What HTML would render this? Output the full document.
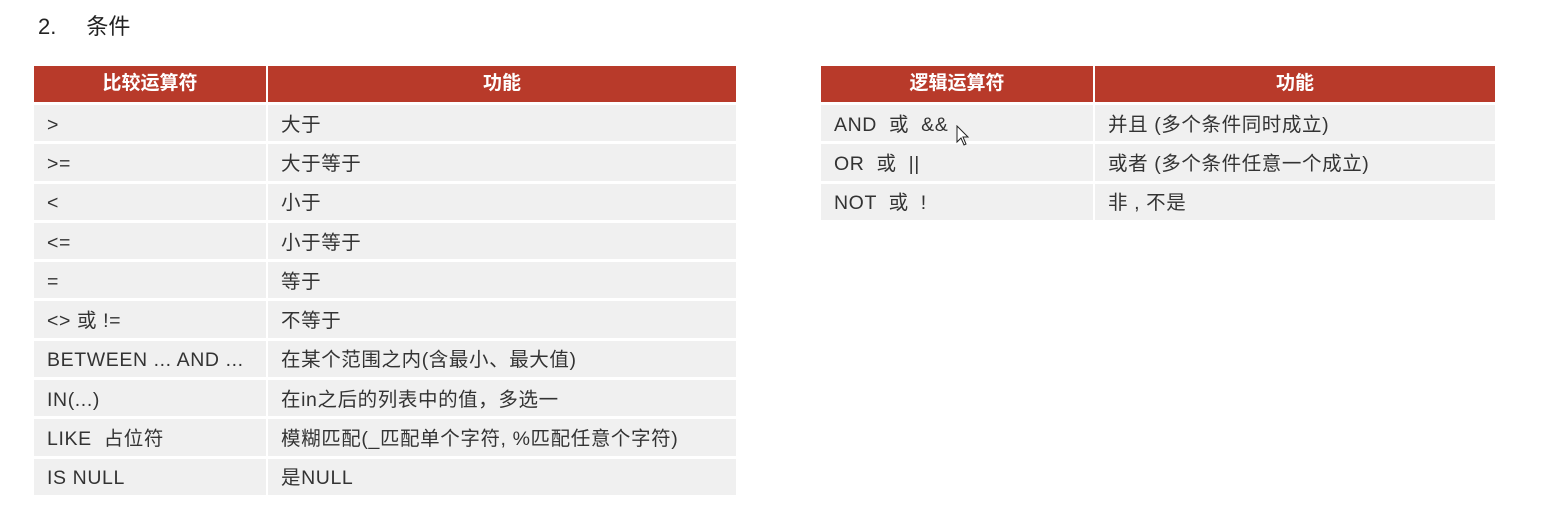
<!DOCTYPE html>
<html><head><meta charset="utf-8"><style>
body{margin:0;width:1563px;height:507px;background:#fff;font-family:"Liberation Sans","Noto Sans CJK SC",sans-serif;color:#333;position:relative;overflow:hidden}
.t{position:absolute;font-size:22px;top:9px;left:38px;color:#222}
.t span{margin-left:30px}
table{position:absolute;border-collapse:separate;border-spacing:2px 3px;top:63px}
th{background:#b83a2a;color:#fff;font-size:19px;font-weight:bold;height:36px;padding:0;line-height:20px}
td{background:#f0f0f0;font-size:19.5px;letter-spacing:0.6px;height:33.3px;line-height:22px;padding:3px 0 0 13px;color:#333;vertical-align:middle}
</style></head><body>
<div class="t">2.<span>条件</span></div>
<table style="left:32px">
<tr><th style="width:232px">比较运算符</th><th style="width:468px">功能</th></tr>
<tr><td>&gt;</td><td>大于</td></tr>
<tr><td>&gt;=</td><td>大于等于</td></tr>
<tr><td>&lt;</td><td>小于</td></tr>
<tr><td>&lt;=</td><td>小于等于</td></tr>
<tr><td>=</td><td>等于</td></tr>
<tr><td>&lt;&gt; 或 !=</td><td>不等于</td></tr>
<tr><td>BETWEEN ... AND ...</td><td>在某个范围之内(含最小、最大值)</td></tr>
<tr><td>IN(...)</td><td>在in之后的列表中的值，多选一</td></tr>
<tr><td>LIKE &nbsp;占位符</td><td>模糊匹配(_匹配单个字符, %匹配任意个字符)</td></tr>
<tr><td>IS NULL</td><td>是NULL</td></tr>
</table>
<table style="left:819px">
<tr><th style="width:272px">逻辑运算符</th><th style="width:400px">功能</th></tr>
<tr><td>AND &nbsp;或 &nbsp;&amp;&amp;</td><td>并且 (多个条件同时成立)</td></tr>
<tr><td>OR &nbsp;或 &nbsp;||</td><td>或者 (多个条件任意一个成立)</td></tr>
<tr><td>NOT &nbsp;或 &nbsp;!</td><td>非 , 不是</td></tr>
</table>
<svg style="position:absolute;left:956px;top:125px" width="14" height="22" viewBox="0 0 14 22"><path d="M1 1 L1 17 L5 13 L8 20 L10 19 L7 12 L12 12 Z" fill="#fff" stroke="#222" stroke-width="1"/></svg>
</body></html>
